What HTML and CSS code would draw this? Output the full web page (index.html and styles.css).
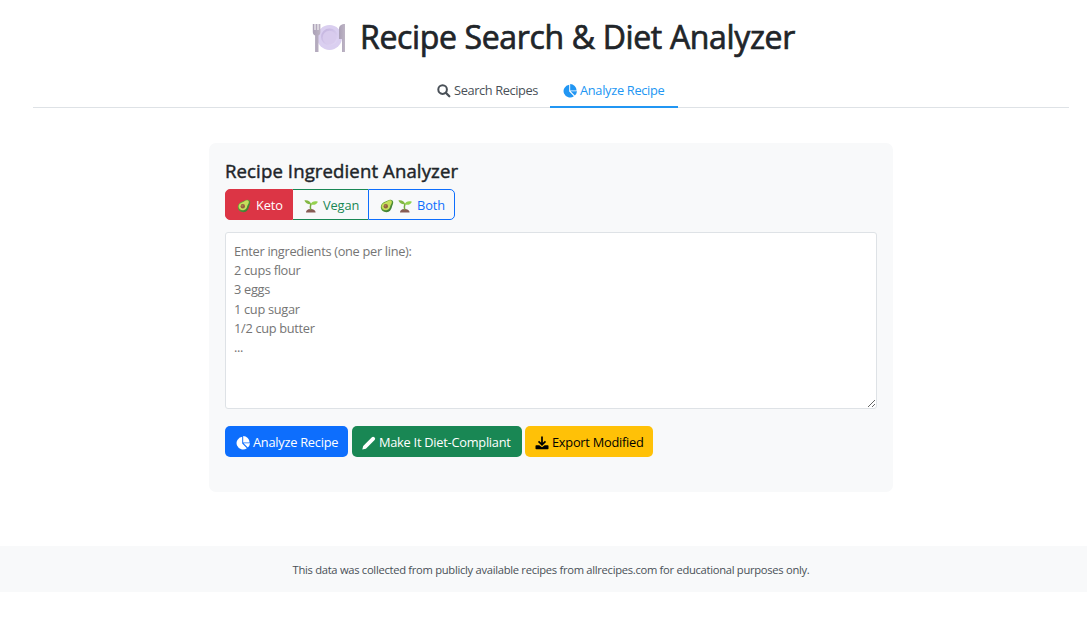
FILE: index.html
```html
<!DOCTYPE html>
<html lang="en">
<head>
<meta charset="utf-8">
<title>Recipe Search &amp; Diet Analyzer</title>
<link rel="stylesheet" href="styles.css">
</head>
<body>
<svg class="defs" aria-hidden="true">
  <defs>
    <linearGradient id="g-skin" x1="0" y1="0" x2="1" y2="1"><stop offset="0" stop-color="#7cb832"/><stop offset="1" stop-color="#2f7138"/></linearGradient>
    <linearGradient id="g-metal" x1="0" y1="0" x2="1" y2="0"><stop offset="0" stop-color="#aaa0b6"/><stop offset="1" stop-color="#beb5c5"/></linearGradient>
    <linearGradient id="g-dish" x1="0" y1="0" x2="1" y2="1"><stop offset="0" stop-color="#c1b1dd"/><stop offset="1" stop-color="#e4daf6"/></linearGradient>
    <symbol id="pie" viewBox="0 0 14 14"><path d="M6.200.8V7.500l4.700 4.700A6.400 6.400 0 1 1 6.200.8Z"/><path d="M7.200 0A6.500 6.500 0 0 1 13.600 6.400H7.200Z"/><path d="M7.600 7.300H14a6.700 6.700 0 0 1-2.200 4.300Z"/></symbol>
    <symbol id="avocado" viewBox="0 0 14 14"><path d="M10.900.7c1.700.3 2.500 1.500 2.300 3.100-.2 1.600-.8 2.400-1.300 4.200-.8 2.800-2.300 5.200-5.400 5.200C3.100 13.200.8 11 .8 8.100c0-3 2.200-4.900 4.700-5.600C7.500 1.900 8.500.3 10.900.7Z" fill="url(#g-skin)"/><path d="M10.300 1.200c1.300.2 1.700 1 1.500 2.200-.3 1.300-1 2-1.500 3.700-.6 2.300-1.700 4.200-4.100 4.200C3.500 11.300 1.600 9.900 1.600 7.600c0-2.300 1.900-3.600 4-4.300C7.600 2.600 8.400.9 10.300 1.200Z" fill="#c6de5c"/><circle cx="5.800" cy="7.300" r="2.200" fill="#93623f"/><circle cx="5.300" cy="6.800" r="1" fill="#ad7c53"/></symbol>
    <symbol id="seedling" viewBox="0 0 14 14"><path d="M2 13.500c.1-1.900 1.100-2.400 2-2.900 1-.8 4.300-.9 5.300 0 1 .5 2.200 1 2.300 2.900Z" fill="#875c55"/><path d="M6.800 11c-.8-2.200-.5-4.300.2-6.500" fill="none" stroke="#73a83d" stroke-width="1.500"/><path d="M6.900 5.100C4.200 5.600 1.500 4.200.4 1.400 3.600.9 6.300 2 6.900 5.100Z" fill="#83b843"/><path d="M6.700 5.200c.8-2.500 3.700-3.500 7.200-2.500C12.900 5.300 9.600 6.700 6.700 5.200Z" fill="#94d24e"/></symbol>
  </defs>
</svg>
<header class="header">
  <svg class="plate" viewBox="0 0 34 30"><circle cx="17.500" cy="14.500" r="12.500" fill="#dacff0"/><circle cx="17.500" cy="14" r="8.500" fill="url(#g-dish)"/><circle cx="17.500" cy="14.500" r="6.800" fill="#d8cbed"/><path d="M.8 1h1.700v6h1V1h2v6h1V1h1.900v8c0 2-.8 3-1.900 3.500V29H3.100V12.500C1.700 12 .8 11 .8 9Z" fill="url(#g-metal)"/><path d="M33 1v28h-3V16h-3V6c0-3.500 2.500-5 6-5Z" fill="url(#g-metal)"/></svg>
  <h1 class="title">Recipe Search &amp; Diet Analyzer</h1>
</header>
<nav class="tabs">
  <a class="tab"><svg class="icon" viewBox="0 0 14 14"><circle cx="5.600" cy="5.600" r="4.300" fill="none" stroke="currentColor" stroke-width="2"/><path d="m8.800 8.800 3.500 3.500" stroke="currentColor" stroke-width="2.300" stroke-linecap="round"/></svg><span>Search Recipes</span></a>
  <a class="tab tab-active"><svg class="icon"><use href="#pie"/></svg><span>Analyze Recipe</span></a>
</nav>
<main class="card">
  <h2 class="card-title">Recipe Ingredient Analyzer</h2>
  <div class="diets">
    <button class="diet keto"><svg class="emoji"><use href="#avocado"/></svg><span>Keto</span></button>
    <button class="diet vegan"><svg class="emoji"><use href="#seedling"/></svg><span>Vegan</span></button>
    <button class="diet both"><svg class="emoji"><use href="#avocado"/></svg><svg class="emoji"><use href="#seedling"/></svg><span>Both</span></button>
  </div>
  <textarea class="ingredients" placeholder="Enter ingredients (one per line):&#10;2 cups flour&#10;3 eggs&#10;1 cup sugar&#10;1/2 cup butter&#10;..."></textarea>
  <div class="actions">
    <button class="action analyze"><svg class="icon"><use href="#pie"/></svg><span>Analyze Recipe</span></button>
    <button class="action convert"><svg class="icon" viewBox="0 0 14 14"><path d="m.3 13.600.9-3.600L9.900 1.300q1.200-1.200 2.400 0l.3.300q1.200 1.200 0 2.400L3.900 12.700Z"/></svg><span>Make It Diet-Compliant</span></button>
    <button class="action export"><svg class="icon" viewBox="0 0 14 14"><path d="M1.300 9.300h3L7 11.300 9.700 9.300h3q.8 0 .8.800v2.300q0 .8-.8.8H1.300q-.8 0-.8-.8v-2.300q0-.8.8-.8Z"/><path d="M7 .6v8M3.500 5.300 7 8.700l3.500-3.400" fill="none" stroke="currentColor" stroke-width="1.700"/></svg><span>Export Modified</span></button>
  </div>
</main>
<footer class="footer"><span>This data was collected from publicly available recipes from allrecipes.com for educational purposes only.</span></footer>
</body>
</html>
```
FILE: styles.css
```css
* { box-sizing: border-box; }
body { margin: 0; background: #fff; color: #212529; font: 12.8px/19.2px "Segoe UI", "Open Sans", "Noto Sans", sans-serif; }
button { font: inherit; margin: 0; }
span, h1, h2 { white-space: nowrap; }
.defs { display: block; width: 0; height: 0; }
.header { display: flex; height: 74px; padding: 18px 0 0 312px; }
.plate { width: 34px; height: 30px; margin-top: 5px; flex: none; }
.title { margin: 0 0 0 14px; font-size: 32px; line-height: 38px; font-weight: 400; letter-spacing: -.35px; -webkit-text-stroke: .7px; }
.tabs { display: flex; justify-content: center; height: 34px; margin: 0 18px 0 33px; border-bottom: 1px solid #dee2e6; }
.tab { display: flex; align-items: center; width: 128px; height: 34px; padding: 2px 0 0 14px; border-bottom: 2px solid transparent; color: #495057; letter-spacing: -.38px; }
.tab-active { color: #2196f3; border-color: #2196f3; padding-left: 13px; letter-spacing: -.3px; }
.tabs .tab:first-child { width: 127px; margin-left: -1px; }
.icon { width: 14px; height: 14px; margin-right: 3px; fill: currentColor; flex: none; }
.card { width: 684px; height: 349px; margin: 35px 0 0 209px; padding: 16px; border-radius: 7px; background: #f8f9fa; }
.card-title { margin: 0; height: 30px; font-size: 18.6px; line-height: 23px; font-weight: 400; letter-spacing: .1px; -webkit-text-stroke: .45px; }
.diets { display: flex; height: 31px; }
.diet { display: flex; align-items: center; padding: 2px 0 0 11px; border: 1px solid; background: transparent; letter-spacing: -.1px; }
.keto { width: 68px; background: #dc3545; color: #fff; border-color: #dc3545; border-radius: 5px 0 0 5px; }
.vegan { width: 75px; color: #198754; border-color: #198754; border-width: 1px 0; }
.both { width: 87px; color: #0d6efd; border-color: #0d6efd; border-radius: 0 5px 5px 0; }
.emoji { width: 14px; height: 14px; margin-right: 5px; flex: none; }
.both .emoji:first-child { margin-right: 4px; }
.ingredients { display: block; width: 652px; height: 177px; margin: 12px 0 17px; padding: 9px 8px; border: 1px solid #dee2e6; border-radius: 3px; background: #fff; font: inherit; resize: both; letter-spacing: -.31px; }
.ingredients::placeholder { color: #757575; }
.actions { display: flex; gap: 4px; }
.action { display: flex; align-items: center; height: 31px; padding: 2px 0 0 11px; border: 0; border-radius: 5px; color: #fff; letter-spacing: -.25px; }
.analyze { width: 123px; background: #0d6efd; }
.convert { width: 170px; padding-left: 10px; background: #198754; }
.export { width: 128px; padding-left: 10px; margin-left: -1px; background: #ffc107; color: #000; }
.footer { display: flex; justify-content: center; align-items: center; height: 46px; margin-top: 54px; padding: 2px 0 0 15px; background: #f8f9fa; color: #495057; font-size: 11.2px; letter-spacing: -.29px; }
```
